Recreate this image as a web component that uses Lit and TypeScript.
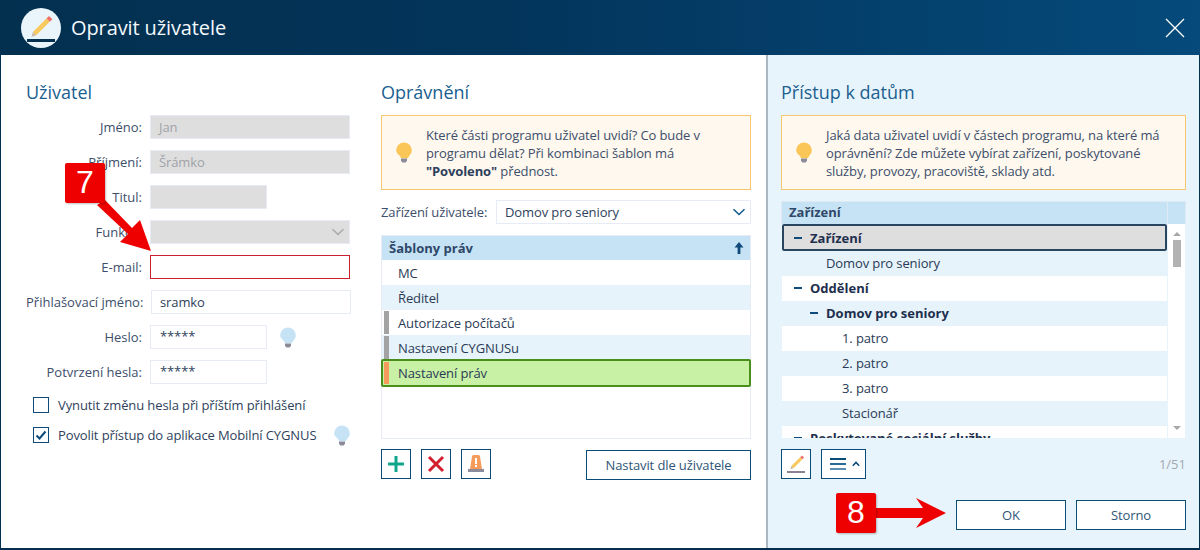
import { LitElement, html, css, svg } from "lit";
import { customElement } from "lit/decorators.js";

const bulb = (fill: string) => html`<svg class="bulb" width="18" height="21" viewBox="0 0 18 21">
  <path d="M9 0.5a7.8 7.8 0 0 1 7.8 7.8c0 2.9-1.6 4.3-2.8 5.9-.6.8-.9 1.3-1 2H6c-.1-.7-.4-1.2-1-2C3.800 12.600 1.200 11.200 1.200 8.300A7.800 7.800 0 0 1 9 .5z" fill="${fill}"/>
  <path d="M6 16.500h6v2.200l-1.300 1.800H7.300L6 18.700z" fill="#8b8b9a"/>
</svg>`;

const chevron = (c: string) => html`<svg class="chev" width="14" height="8" viewBox="0 0 14 8"><path d="M1.500 1.200 7 6.500l5.500-5.300" fill="none" stroke="${c}" stroke-width="1.500"/></svg>`;

const pencil = svg`
  <path d="M1.600 13.600 13.100 2.100l2.800 2.800L4.400 16.400z" fill="#f8c95d"/>
  <path d="M1.600 13.600l2.800 2.800-3.900 1.100z" fill="#c9b9a0"/>
  <path d="M13.100 2.100 15.300-.1l2.800 2.800-2.200 2.200z" fill="#ef6f6c"/>`;

@customElement("app-root")
export class AppRoot extends LitElement {
  static styles = css`
    :host { display: block; width: 1200px; height: 550px; font-family: "Open Sans", sans-serif; font-size: 13px; letter-spacing: -0.11px; color: #2f3f5c; }
    * { box-sizing: border-box; }
    .frame { position: relative; width: 1200px; height: 550px; display: flex; flex-direction: column; overflow: hidden; }
    .head { height: 55px; flex: none; display: flex; align-items: center; padding: 0 15px 0 21px; background: linear-gradient(90deg, #03304f 0%, #03345a 40%, #054a7b 100%); color: #fff; }
    .logo { width: 40px; height: 40px; flex: none; }
    .head h1 { margin: 0 0 0 10px; font-size: 20px; font-weight: 400; line-height: 27px; flex: 1; color: #f4f9fd; }
    .close { width: 20px; height: 20px; flex: none; }
    .body { flex: 1; display: flex; border: 1px solid #03304f; border-top: 0; border-bottom-width: 2px; min-height: 0; }
    .main { width: 765px; flex: none; display: flex; gap: 30px; padding: 25px 15px 0 25px; background: #fff; }
    .divider { width: 2px; flex: none; background: #aab6c1; }
    .side { flex: 1; padding: 25px 13px 0; background: #e8f4fb; min-width: 0; }
    h2 { margin: 0 0 11px; font-size: 18px; font-weight: 400; line-height: 24px; letter-spacing: 0; color: #1a5f90; }
    .user { width: 325px; flex: none; }
    .perm { width: 370px; flex: none; }
    .form { display: flex; flex-direction: column; gap: 11px; }
    .row { display: flex; align-items: center; height: 24px; }
    .lbl { width: 116px; flex: none; margin-right: 8px; text-align: right; letter-spacing: 0; color: #3d4e6b; white-space: nowrap; }
    .field { width: 200px; height: 24px; flex: none; display: flex; align-items: center; justify-content: space-between; padding: 0 4px 0 8px; border: 1px solid #e7ebf6; background: #fff; color: #2f3f5c; }
    .field.dis { background: #dedede; color: #a0a3a8; }
    .field.err { border-color: #c8202c; }
    .field.short { width: 117px; }
    .field.shift { margin-left: 1px; }
    .stars { padding-bottom: 3px; padding-left: 1px; }
    .hint { margin-left: 12px; display: flex; }
    .checks { display: flex; flex-direction: column; gap: 14px; margin-top: 13px; padding-left: 7px; }
    .check { display: flex; align-items: center; height: 16px; white-space: nowrap; }
    .box { width: 16px; height: 16px; flex: none; border: 1px solid #0f4a7a; margin-right: 9px; background: #fff; display: flex; }
    .bulb { flex: none; }
    .check .bulb { margin-left: 17px; }
    .info { height: 75px; display: flex; align-items: center; border: 1px solid #f6c770; background: #fef8ee; padding-left: 13px; line-height: 18px; color: #3d4e6b; }
    .info .bulb { margin-right: 13px; }
    .info b { color: #2f3f5c; }
    .select-row { display: flex; align-items: center; height: 24px; margin-top: 10px; }
    .select-row span.t { width: 115px; flex: none; color: #3d4e6b; white-space: nowrap; }
    .select-row .field { width: 255px; }
    .table { height: 204px; margin-top: 11px; border: 1px solid #e7ebf6; display: flex; flex-direction: column; }
    .thead { height: 24px; flex: none; display: flex; align-items: center; justify-content: space-between; padding: 0 5px 1px 7px; background: #c5e3f5; font-weight: 700; letter-spacing: 0; color: #2f4768; }
    .tr { height: 25px; flex: none; display: flex; align-items: center; padding-left: 16px; position: relative; color: #2a3a55; }
    .tr.alt { background: #e6f3fb; }
    .tr .mark { position: absolute; left: 2px; top: 1px; bottom: 1px; width: 5px; background: #a3a3a3; }
    .tr.sel { height: 28px; margin: -1px -1px 0; padding: 0 0 1px 15px; background: #c8f1a5; border: 2px solid #4a8f1a; border-radius: 2px; }
    .tr.sel .mark { left: 1px; background: #f59b5c; top: 1px; bottom: 1px; }
    .tools { display: flex; align-items: flex-start; gap: 10px; margin-top: 10px; }
    .ic { width: 30px; height: 30px; flex: none; border: 1px solid #0a4c78; background: #fff; display: flex; align-items: center; justify-content: center; }
    .ic.wide { width: 45px; gap: 6px; padding-left: 2px; }
    .btn { height: 30px; display: flex; align-items: center; justify-content: center; border: 1px solid #0a4c78; background: #fff; color: #2f5577; }
    .btn.set { width: 165px; margin: 1px 0 0 auto; }
    .tree { height: 237px; margin-top: 11px; display: flex; flex-direction: column; }
    .tree-head { height: 23px; flex: none; display: flex; border: 1px solid #dfe9f4; border-bottom: 0; background: #c5e3f5; font-weight: 700; letter-spacing: 0; color: #2f4768; }
    .tree-head span { flex: 1; padding-left: 7px; line-height: 20px; }
    .tree-head i { width: 18px; flex: none; border-left: 1px solid #dfe9f4; }
    .tree-body { flex: 1; display: flex; min-height: 0; overflow: hidden; margin-left: 1px; }
    .rows { width: 385px; flex: none; overflow: hidden; background: #fff; }
    .scroll { width: 17px; flex: none; background: #fff; margin-left: 1px; display: flex; flex-direction: column; align-items: center; justify-content: space-between; padding: 8px 0 8px; }
    .thumb { width: 8px; height: 27px; background: #b2b2b2; margin-top: 4px; margin-bottom: auto; }
    .arrow { width: 0; height: 0; border-left: 4px solid transparent; border-right: 4px solid transparent; }
    .arrow.up { border-bottom: 4px solid #a8a8a8; }
    .arrow.down { border-top: 4px solid #a8a8a8; }
    .node { height: 25px; display: flex; align-items: center; padding-bottom: 1px; color: #2a3a55; white-space: nowrap; }
    .node.alt { background: #e6f3fb; }
    .node.bold { font-weight: 700; letter-spacing: 0; color: #1e2f4d; }
    .node.cur { height: 27px; padding-bottom: 0; background: #dedede; border: 2px solid #2a4560; border-radius: 2px; }
    .node.l0 { padding-left: 12px; }
    .node.l1 { padding-left: 28px; }
    .node.leaf.l0 { padding-left: 44px; }
    .node.leaf.l1 { padding-left: 60px; }
    .node.cur.l0 { padding-left: 10px; }
    .minus { width: 8px; height: 2px; flex: none; background: #0f4a7a; margin-right: 8px; }
    .foot { display: flex; align-items: center; gap: 10px; margin-top: 11px; }
    .count { margin-left: auto; color: #a3a8ae; font-size: 13px; letter-spacing: 0; }
    .actions { display: flex; justify-content: flex-end; gap: 10px; margin-top: 21px; }
    .btn.act { width: 110px; }
    .callouts { position: absolute; left: 0; top: 0; width: 1200px; height: 550px; pointer-events: none; }
    .badge { position: absolute; width: 40px; height: 40px; background: #ee0000; border-radius: 2px; color: #fff; font-family: "Liberation Sans", sans-serif; font-size: 32px; letter-spacing: 0; line-height: 39px; text-align: center; box-shadow: 1px 1px 2px rgba(0,0,0,.25); }
    .b7 { left: 65px; top: 163px; }
    .b8 { left: 836px; top: 493px; }
  `;

  render() {
    const perms: [string, boolean, string][] = [
      ["MC", false, ""],
      ["Ředitel", true, ""],
      ["Autorizace počítačů", false, "m"],
      ["Nastavení CYGNUSu", true, "m"],
    ];
    const nodes: [string, string][] = [
      ["Domov pro seniory", "leaf l0 alt"],
      ["Oddělení", "bold l0"],
      ["Domov pro seniory", "bold l1 alt"],
      ["1. patro", "leaf l1"],
      ["2. patro", "leaf l1 alt"],
      ["3. patro", "leaf l1"],
      ["Stacionář", "leaf l1 alt"],
      ["Poskytované sociální služby", "bold l0"],
    ];
    return html`<div class="frame">
      <header class="head">
        <svg class="logo" viewBox="0 0 40 40">
          <defs><clipPath id="lc"><circle cx="20" cy="20" r="20"/></clipPath></defs>
          <circle cx="20" cy="20" r="20" fill="#e9f4fb"/>
          <g transform="translate(10 8) scale(1.180)">${pencil}</g>
          <rect x="6" y="31" width="28" height="3" fill="#06304f" clip-path="url(#lc)"/>
        </svg>
        <h1>Opravit uživatele</h1>
        <svg class="close" viewBox="0 0 20 20"><path d="M1 1l18 18M19 1 1 19" stroke="#fff" stroke-width="1.300" fill="none"/></svg>
      </header>
      <div class="body">
        <div class="main">
          <section class="user">
            <h2>Uživatel</h2>
            <div class="form">
              <div class="row"><span class="lbl">Jméno:</span><div class="field dis">Jan</div></div>
              <div class="row"><span class="lbl">Příjmení:</span><div class="field dis">Šrámko</div></div>
              <div class="row"><span class="lbl">Titul:</span><div class="field dis short"></div></div>
              <div class="row"><span class="lbl">Funkce:</span><div class="field dis"><span></span>${chevron("#a9a9a9")}</div></div>
              <div class="row"><span class="lbl">E-mail:</span><div class="field err"></div></div>
              <div class="row"><span class="lbl">Přihlašovací jméno:</span><div class="field shift">sramko</div></div>
              <div class="row"><span class="lbl">Heslo:</span><div class="field short"><span class="stars">*****</span></div><span class="hint">${bulb("#c5e3f5")}</span></div>
              <div class="row"><span class="lbl">Potvrzení hesla:</span><div class="field short"><span class="stars">*****</span></div></div>
            </div>
            <div class="checks">
              <label class="check"><span class="box"></span>Vynutit změnu hesla při příštím přihlášení</label>
              <label class="check"><span class="box"><svg width="14" height="14" viewBox="0 0 14 14"><path d="M2.500 7.500 5.500 10.500 11.500 3.500" fill="none" stroke="#0f4a7a" stroke-width="2"/></svg></span>Povolit přístup do aplikace Mobilní CYGNUS${bulb("#c5e3f5")}</label>
            </div>
          </section>
          <section class="perm">
            <h2>Oprávnění</h2>
            <div class="info">${bulb("#fbc658")}<div>Které části programu uživatel uvidí? Co bude v<br>programu dělat? Při kombinaci šablon má<br><b>"Povoleno"</b> přednost.</div></div>
            <div class="select-row"><span class="t">Zařízení uživatele:</span><div class="field">Domov pro seniory ${chevron("#0f5a8c")}</div></div>
            <div class="table">
              <div class="thead">Šablony práv
                <svg width="12" height="14" viewBox="0 0 12 14"><path d="M6 1 1.500 6.500H4.600V13H7.400V6.500H10.500z" fill="#0f4a7a"/></svg>
              </div>
              ${perms.map(([t, alt, m]) => html`<div class="tr ${alt ? "alt" : ""}">${m ? html`<span class="mark"></span>` : ""}${t}</div>`)}
              <div class="tr sel"><span class="mark"></span>Nastavení práv</div>
            </div>
            <div class="tools">
              <div class="ic"><svg width="20" height="20" viewBox="0 0 20 20"><path d="M10 2v16M2 10h16" stroke="#0fa68e" stroke-width="3" fill="none"/></svg></div>
              <div class="ic"><svg width="18" height="18" viewBox="0 0 18 18"><path d="M2 2l14 14M16 2 2 16" stroke="#d3202f" stroke-width="3" fill="none"/></svg></div>
              <div class="ic"><svg width="18" height="20" viewBox="0 0 18 20"><path d="M5 2.500a1.500 1.500 0 0 1 1.500-1.500h5a1.500 1.500 0 0 1 1.500 1.500L15 15H3z" fill="#f59b5c"/><rect x="1" y="15" width="16" height="3" fill="#8b8b9a"/><rect x="8" y="4" width="2" height="6" fill="#fff"/><rect x="8" y="11" width="2" height="2" fill="#fff"/></svg></div>
              <div class="btn set">Nastavit dle uživatele</div>
            </div>
          </section>
        </div>
        <div class="divider"></div>
        <section class="side">
          <h2>Přístup k datům</h2>
          <div class="info">${bulb("#fbc658")}<div>Jaká data uživatel uvidí v částech programu, na které má<br>oprávnění? Zde můžete vybírat zařízení, poskytované<br>služby, provozy, pracoviště, sklady atd.</div></div>
          <div class="tree">
            <div class="tree-head"><span>Zařízení</span><i></i></div>
            <div class="tree-body">
              <div class="rows">
                <div class="node bold cur l0"><span class="minus"></span>Zařízení</div>
                ${nodes.map(([t, c]) => html`<div class="node ${c}">${c.includes("bold") ? html`<span class="minus"></span>` : ""}${t}</div>`)}
              </div>
              <div class="scroll"><span class="arrow up"></span><span class="thumb"></span><span class="arrow down"></span></div>
            </div>
          </div>
          <div class="foot">
            <div class="ic"><svg width="20" height="22" viewBox="0 0 20 22"><g transform="translate(4 2.500) scale(.78)">${pencil}</g><rect x="1" y="18" width="18" height="2" fill="#8b8094"/></svg></div>
            <div class="ic wide">
              <svg width="16" height="13" viewBox="0 0 16 13"><rect width="16" height="2" fill="#0a4c78"/><rect y="5" width="16" height="2" fill="#2b6b98"/><rect y="10" width="16" height="2" fill="#5a8eb2"/></svg>
              <svg width="8" height="6" viewBox="0 0 8 6"><path d="M.8 4.800 4 1.500l3.200 3.300" fill="none" stroke="#0a4c78" stroke-width="1.600"/></svg>
            </div>
            <span class="count">1/51</span>
          </div>
          <div class="actions">
            <div class="btn act">OK</div>
            <div class="btn act">Storno</div>
          </div>
        </section>
      </div>
      <svg class="callouts" viewBox="0 0 1200 550">
        <polygon points="105,200 132,228 140,220 151,251 120,242 128,234 97,205" fill="#ee0000"/>
        <polygon points="876,508 923,508 916,498 946,513 916,528 923,518 876,518" fill="#ee0000"/>
      </svg>
      <div class="badge b7">7</div>
      <div class="badge b8">8</div>
    </div>`;
  }
}
